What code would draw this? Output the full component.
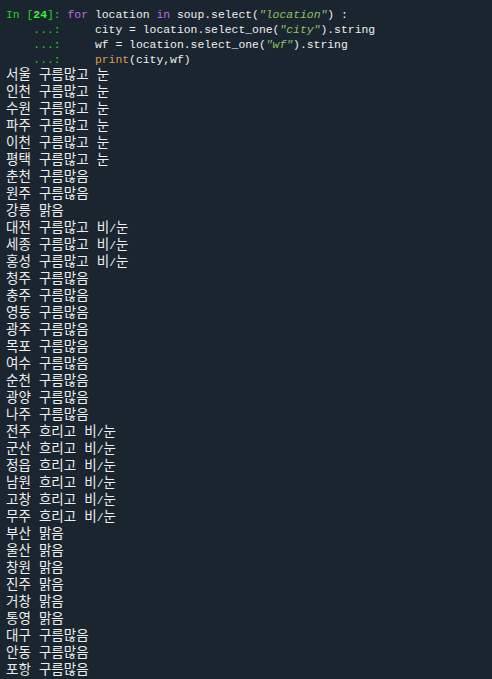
const mono = 'font-["Liberation_Mono","DejaVu_Sans_Mono",monospace]'

const rows: [string, string][] = [
  ['서울', '구름많고 눈'],
  ['인천', '구름많고 눈'],
  ['수원', '구름많고 눈'],
  ['파주', '구름많고 눈'],
  ['이천', '구름많고 눈'],
  ['평택', '구름많고 눈'],
  ['춘천', '구름많음'],
  ['원주', '구름많음'],
  ['강릉', '맑음'],
  ['대전', '구름많고 비/눈'],
  ['세종', '구름많고 비/눈'],
  ['홍성', '구름많고 비/눈'],
  ['청주', '구름많음'],
  ['충주', '구름많음'],
  ['영동', '구름많음'],
  ['광주', '구름많음'],
  ['목포', '구름많음'],
  ['여수', '구름많음'],
  ['순천', '구름많음'],
  ['광양', '구름많음'],
  ['나주', '구름많음'],
  ['전주', '흐리고 비/눈'],
  ['군산', '흐리고 비/눈'],
  ['정읍', '흐리고 비/눈'],
  ['남원', '흐리고 비/눈'],
  ['고창', '흐리고 비/눈'],
  ['무주', '흐리고 비/눈'],
  ['부산', '맑음'],
  ['울산', '맑음'],
  ['창원', '맑음'],
  ['진주', '맑음'],
  ['거창', '맑음'],
  ['통영', '맑음'],
  ['대구', '구름많음'],
  ['안동', '구름많음'],
  ['포항', '구름많음'],
]

function Str({ children }: { children: string }) {
  return <span className="italic text-[#8cc265]">{children}</span>
}

function Cont() {
  return <span className="text-[#16d916]">{'    ...: '}</span>
}

// "비/눈": the slash is a narrow latin glyph between two hangul ones
function Weather({ text }: { text: string }) {
  const parts = text.split('/')
  if (parts.length === 1) return <>{text}</>
  return (
    <>
      {parts[0]}
      <span className="text-[11.4px] leading-[0]">/</span>
      {parts[1]}
    </>
  )
}

export default function App() {
  return (
    <div className="h-[679px] w-[492px] overflow-hidden bg-[#1b2530] px-[6px] pt-[8px] text-[#eeeeee]">
      <div className={`${mono} whitespace-pre text-[11.4px] leading-[15px]`}>
        <div>
          <span className="text-[#16d916]">In [</span>
          <span className="font-bold text-[#3cf03c]">24</span>
          <span className="text-[#16d916]">]: </span>
          <span className="text-[#b86ee0]">for</span> location <span className="text-[#b86ee0]">in</span> soup.select(
          <Str>"location"</Str>) :
        </div>
        <div>
          <Cont />
          {'    '}city = location.select_one(<Str>"city"</Str>).string
        </div>
        <div>
          <Cont />
          {'    '}wf = location.select_one(<Str>"wf"</Str>).string
        </div>
        <div>
          <Cont />
          {'    '}
          <span className="text-[#d79a55]">print</span>(city,wf)
        </div>
      </div>
      <div className='mt-[-1px] whitespace-pre font-["Liberation_Mono","Noto_Sans_CJK_KR",monospace] text-[13.5px] leading-[17px]'>
        {rows.map(([city, wf]) => (
          <div key={city} className="h-[17px]">
            {city} <Weather text={wf} />
          </div>
        ))}
      </div>
    </div>
  )
}
